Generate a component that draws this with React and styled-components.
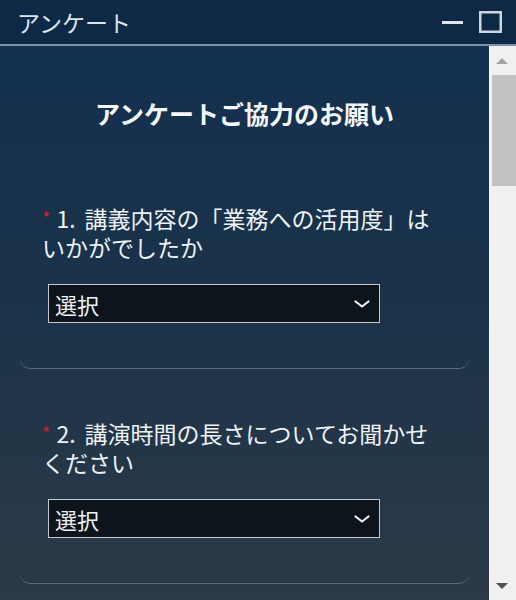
import React from 'react'
import styled, { createGlobalStyle } from 'styled-components'

const GlobalStyle = createGlobalStyle`
  html, body {
    margin: 0;
    padding: 0;
    background: #0e2946;
  }
  body {
    font-family: "Noto Sans CJK JP", "Noto Sans", sans-serif;
  }
`;

const Window = styled.div`
  display: flex;
  flex-direction: column;
  width: 516px;
  height: 600px;
  overflow: hidden;
`;

const TitleBar = styled.div`
  display: flex;
  align-items: center;
  flex: 0 0 44px;
  padding: 0 14px 0 17px;
  background-color: #0e2946;
  border-bottom: 2px solid #7d90a2;
`;

const Title = styled.div`
  flex: 1;
  font-size: 23px;
  line-height: 44px;
  color: #dde4ec;
`;

const Controls = styled.div`
  display: flex;
  align-items: center;
  gap: 16px;
`;

const Body = styled.div`
  display: flex;
  flex: 1;
  min-height: 0;
`;

const Content = styled.div`
  flex: 1;
  background: linear-gradient(180deg, #12304f 0%, #1c3349 50%, #2c3a47 100%);
  overflow: hidden;
`;

const Heading = styled.h1`
  margin: 0;
  padding: 50px 0 24px;
  text-align: center;
  font-size: 25px;
  line-height: 34px;
  font-weight: 700;
  color: #f4f7fa;
`;

const Card = styled.div`
  margin: 0 20px;
  padding: 50px 28px 45px 22px;
  border-bottom: 1px solid #5b6b7b;
  border-radius: 0 0 10px 10px;
`;

const Question = styled.div`
  font-size: 23px;
  line-height: 29px;
  color: #eef2f6;
`;

const Required = styled.span`
  margin-right: 6px;
  font-size: 18px;
  line-height: 0;
  vertical-align: 3px;
  color: #d8202c;
`;

const Num = styled.span`
  margin-right: 9px;
`;

const Select = styled.div`
  display: flex;
  align-items: center;
  justify-content: space-between;
  box-sizing: border-box;
  width: 332px;
  height: 39px;
  margin: 22px 0 0 6px;
  padding: 0 8px 0 6px;
  background-color: #0e141b;
  border: 1px solid #c5c9cd;
  font-size: 22px;
  color: #eef2f6;
  cursor: pointer;
`;

const Scrollbar = styled.div`
  display: flex;
  flex-direction: column;
  flex: 0 0 26px;
  background-color: #f0f0f0;
  border-left: 1px solid #f8f8f8;
`;

const ArrowBtn = styled.div`
  display: flex;
  align-items: center;
  justify-content: center;
  flex: 0 0 29px;
  padding-right: 2px;
`;

const Arrow = styled.div`
  width: 0;
  height: 0;
  border-left: 6px solid transparent;
  border-right: 6px solid transparent;
  ${p => p.down
    ? `border-top: 6px solid ${p.color};`
    : `border-bottom: 6px solid ${p.color};`}
`;

const Track = styled.div`
  flex: 1;
`;

const Thumb = styled.div`
  height: 111px;
  margin-left: 2px;
  background-color: #c1c1c1;
`;

const questions = [
  { no: 1, text: '講義内容の「業務への活用度」はいかがでしたか' },
  { no: 2, text: '講演時間の長さについてお聞かせください' },
];

function Chevron() {
  return (
    <svg width="18" height="10" viewBox="0 0 18 10">
      <path d="M2.5 2.5 L9 7.5 L15.5 2.5" fill="none" stroke="#f2f4f6" strokeWidth="2.2" strokeLinecap="round" strokeLinejoin="round" />
    </svg>
  );
}

export default function App() {
  return (
    <Window>
      <GlobalStyle />
      <TitleBar>
        <Title>アンケート</Title>
        <Controls>
          <svg width="22" height="22" viewBox="0 0 22 22">
            <rect x="1" y="10" width="21" height="3" fill="#dfe5ea" />
          </svg>
          <svg width="23" height="23" viewBox="0 0 23 23">
            <rect x="1.25" y="1.25" width="20.5" height="19.5" fill="none" stroke="#cdd5dd" strokeWidth="2.5" />
          </svg>
        </Controls>
      </TitleBar>
      <Body>
        <Content>
          <Heading>アンケートご協力のお願い</Heading>
          {questions.map(q => (
            <Card key={q.no}>
              <Question>
                <Required>*</Required>
                <Num>{q.no}.</Num>
                {q.text}
              </Question>
              <Select>
                <span>選択</span>
                <Chevron />
              </Select>
            </Card>
          ))}
        </Content>
        <Scrollbar>
          <ArrowBtn><Arrow color="#a3a3a3" /></ArrowBtn>
          <Track><Thumb /></Track>
          <ArrowBtn><Arrow down color="#505050" /></ArrowBtn>
        </Scrollbar>
      </Body>
    </Window>
  )
}
